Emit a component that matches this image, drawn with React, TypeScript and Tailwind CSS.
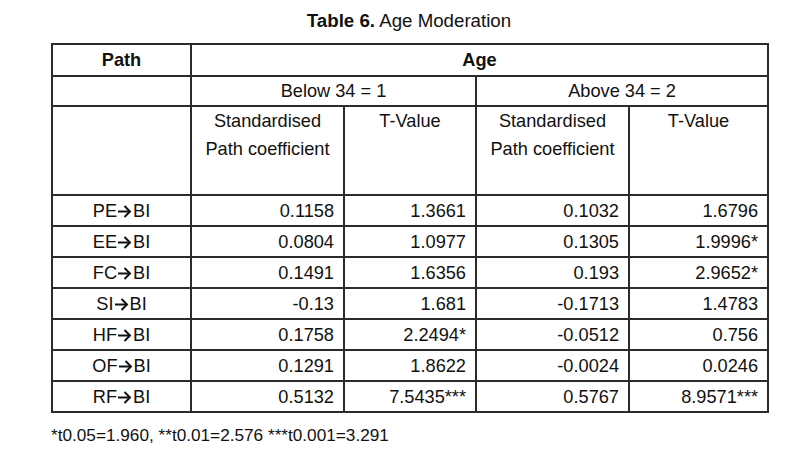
import React from "react";

const Arrow = () => (
  <svg width="14" height="13" viewBox="0 0 14 13" className="inline-block align-baseline mx-[1px]" style={{ verticalAlign: "-1px" }}>
    <path d="M0 6.5H12" stroke="#111" strokeWidth="2" fill="none" />
    <path d="M6.5 1L12 6.5L6.5 12" stroke="#111" strokeWidth="2" fill="none" strokeLinejoin="miter" />
  </svg>
);

const rows: [string, string, string, string, string][] = [
  ["PE", "0.1158", "1.3661", "0.1032", "1.6796"],
  ["EE", "0.0804", "1.0977", "0.1305", "1.9996*"],
  ["FC", "0.1491", "1.6356", "0.193", "2.9652*"],
  ["SI", "-0.13", "1.681", "-0.1713", "1.4783"],
  ["HF", "0.1758", "2.2494*", "-0.0512", "0.756"],
  ["OF", "0.1291", "1.8622", "-0.0024", "0.0246"],
  ["RF", "0.5132", "7.5435***", "0.5767", "8.9571***"],
];

export default function App() {
  const cell = "border-2 border-[#2b2b2b]";
  return (
    <div
      className="w-[793px] h-[461px] bg-white text-[#111] overflow-hidden"
      style={{ fontFamily: '"Liberation Sans", Arial, sans-serif' }}
    >
      <div className="flex flex-col w-[716px] ml-[51px]">
        <div className="h-[43px] pt-[10px] text-center text-[18.7px] leading-[22px]">
          <span className="font-bold">Table 6.</span> Age Moderation
        </div>
        <table className="border-collapse table-fixed w-[716px] text-[18.2px] leading-[28px]">
          <colgroup>
            <col className="w-[139px]" />
            <col className="w-[153px]" />
            <col className="w-[132px]" />
            <col className="w-[153px]" />
            <col className="w-[139px]" />
          </colgroup>
          <tbody>
            <tr className="h-[32px]">
              <td className={`${cell} text-center font-bold`}>Path</td>
              <td colSpan={4} className={`${cell} text-center font-bold`}>Age</td>
            </tr>
            <tr className="h-[30px]">
              <td className={cell}></td>
              <td colSpan={2} className={`${cell} text-center`}>Below 34 = 1</td>
              <td colSpan={2} className={`${cell} text-center`}>Above 34 = 2</td>
            </tr>
            <tr className="h-[89px]">
              <td className={cell}></td>
              <td className={`${cell} text-center align-top pt-0`}>Standardised<br />Path coefficient</td>
              <td className={`${cell} text-center align-top pt-0`}>T-Value</td>
              <td className={`${cell} text-center align-top pt-0`}>Standardised<br />Path coefficient</td>
              <td className={`${cell} text-center align-top pt-0`}>T-Value</td>
            </tr>
            {rows.map((r) => (
              <tr key={r[0]} className="h-[31px]">
                <td className={`${cell} text-center`}>
                  {r[0]}
                  <Arrow />
                  BI
                </td>
                <td className={`${cell} text-right pr-[9px]`}>{r[1]}</td>
                <td className={`${cell} text-right pr-[9px]`}>{r[2]}</td>
                <td className={`${cell} text-right pr-[9px]`}>{r[3]}</td>
                <td className={`${cell} text-right pr-[9px]`}>{r[4]}</td>
              </tr>
            ))}
          </tbody>
        </table>
        <div className="mt-[12px] text-[17.2px] leading-[20px]">
          *t0.05=1.960, **t0.01=2.576 ***t0.001=3.291
        </div>
      </div>
    </div>
  );
}
